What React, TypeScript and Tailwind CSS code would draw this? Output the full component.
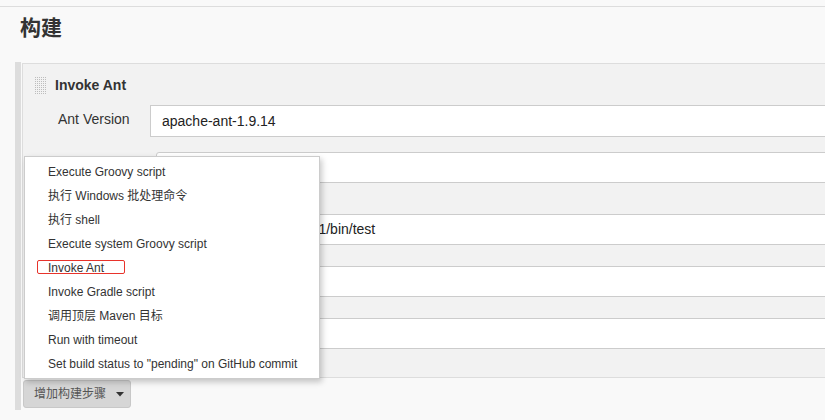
import React from "react";

const menuItems = [
  "Execute Groovy script",
  "执行 Windows 批处理命令",
  "执行 shell",
  "Execute system Groovy script",
  "Invoke Ant",
  "Invoke Gradle script",
  "调用顶层 Maven 目标",
  "Run with timeout",
  'Set build status to "pending" on GitHub commit',
];

function DragHandle() {
  const dots: React.ReactNode[] = [];
  for (let y = 0; y < 17; y += 2) {
    for (let x = 0; x < 12; x += 2) {
      dots.push(<rect key={`${x}-${y}`} x={x} y={y} width="1" height="1" fill="#bdbdbd" />);
    }
  }
  return (
    <svg width="12" height="17" viewBox="0 0 12 17" className="shrink-0">
      {dots}
    </svg>
  );
}

function Field({ label, value, top, h, left = 127 }: { label?: string; value?: string; top: string; h: string; left?: number }) {
  return (
    <div className={`flex items-center ${top}`}>
      <div className="pl-[35px] pb-[3px] text-[14px] text-[#333]" style={{ width: left }}>
        {label}
      </div>
      <div className={`flex-1 ${h} flex items-center bg-white border border-[#ccc] pl-[11px] text-[14px] text-[#222] whitespace-nowrap`}>
        {value}
      </div>
    </div>
  );
}

export default function App() {
  return (
    <div className="relative h-[420px] w-full overflow-hidden bg-[#f9f9f9] text-[#333] font-['Liberation_Sans','Noto_Sans_CJK_SC',sans-serif]">
      <div className="h-[6px]" />
      <div className="border-t border-[#ddd] pl-5 pt-[5px]">
        <h2 className="text-[21px] font-bold leading-[32px] text-[#333]">构建</h2>
      </div>

      <div className="mt-[18px] ml-[15px] flex w-[900px]">
        <div className="w-[6px] h-[348px] shrink-0 bg-[#ddd]" />
        <div className="ml-px flex-1">
          <div className="mt-px border border-[#ddd] bg-[#f2f2f2] pb-[28px]">
            <div className="flex items-center gap-2 pl-3 pt-[13px] h-[30px]">
              <DragHandle />
              <span className="text-[14px] font-bold leading-[17px] text-[#333]">Invoke Ant</span>
            </div>
            <Field top="mt-[11px]" h="h-[32px]" label="Ant Version" value="apache-ant-1.9.14" />
            {/* rows below sit under the open menu */}
            <Field top="mt-[15px]" h="h-[31px] rounded-[3px]" left={133} />
            <Field top="mt-[31px]" h="h-[31px]" value="/data/ant/apache-ant-1.9.1/bin/test" />
            <Field top="mt-[21px]" h="h-[31px]" />
            <Field top="mt-[21px]" h="h-[31px]" />
          </div>
          <button className="mt-[2px] ml-px flex h-[28px] w-[108px] items-center rounded-[3px] border border-[#c8c8c8] bg-[#d6d6d6] pl-[10px] text-[12px] text-[#555]">
            增加构建步骤
            <svg width="8" height="5" viewBox="0 0 8 5" className="ml-[10px]">
              <path d="M0 0 L8 0 L4 4.5 Z" fill="#333" />
            </svg>
          </button>
        </div>
      </div>

      <div className="absolute left-[24px] top-[156px] w-[296px] border border-[#ccc] bg-white pt-[3px] pb-[2px] shadow-[2px_3px_6px_rgba(0,0,0,0.22)]">
        {menuItems.map((item) => (
          <div key={item} className="relative flex h-[24px] items-center pl-[23px] text-[12px] text-[#333] whitespace-nowrap">
            {item}
            {item === "Invoke Ant" && (
              <span className="absolute left-[12px] top-[4px] h-[14px] w-[88px] rounded-[2px] border border-[#e8332b]" />
            )}
          </div>
        ))}
      </div>
    </div>
  );
}
